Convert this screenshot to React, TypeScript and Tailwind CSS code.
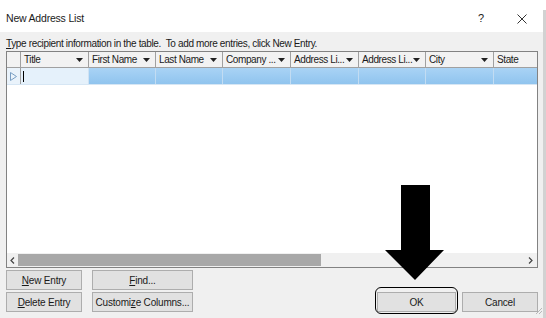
import React from 'react'

const font = { fontFamily: '"Segoe UI", "Liberation Sans", Arial, sans-serif' }

const columns: { label: string; w: string }[] = [
  { label: 'Title', w: 'w-[68px]' },
  { label: 'First Name', w: 'w-[67px]' },
  { label: 'Last Name', w: 'w-[67px]' },
  { label: 'Company ...', w: 'w-[68px]' },
  { label: 'Address Li...', w: 'w-[68px]' },
  { label: 'Address Li...', w: 'w-[67px]' },
  { label: 'City', w: 'w-[68px]' },
]

const DropArrow = () => (
  <svg width="7" height="4" viewBox="0 0 7 4" className="shrink-0">
    <path d="M0 0 L7 0 L3.5 4 Z" fill="#202020" />
  </svg>
)

const HeaderCell: React.FC<{ label: string; w: string }> = ({ label, w }) => (
  <div className={`${w} shrink-0 h-full flex items-center justify-between pl-[3px] pr-[5px] border-r border-[#a0a0a0] bg-[#f2f2f2]`}>
    <span className="text-[10px] tracking-[-0.4px] text-[#1a1a1a] whitespace-nowrap">{label}</span>
    <DropArrow />
  </div>
)

const Btn: React.FC<{ className?: string; children: React.ReactNode }> = ({ className = '', children }) => (
  <button className={`h-[20px] bg-[#e1e1e1] border border-[#adadad] text-[10px] tracking-[-0.2px] text-[#1a1a1a] flex items-center justify-center ${className}`}>
    {children}
  </button>
)

export default function App() {
  return (
    <div className="relative w-[546px] h-[318px] overflow-hidden bg-white flex" style={font}>
      <div className="w-[543px] h-full flex flex-col">
        {/* title bar */}
        <div className="h-[32px] bg-white flex items-center pl-[6px] pr-[16px] pt-[5px]">
          <span className="text-[10.5px] tracking-[-0.2px] text-[#1a1a1a] flex-1">New Address List</span>
          <span className="text-[11px] text-[#1a1a1a] mr-[33px]">?</span>
          <svg width="10" height="10" viewBox="0 0 10 10">
            <path d="M0.5 0.5 L9.5 9.5 M9.5 0.5 L0.5 9.5" stroke="#333" strokeWidth="1" />
          </svg>
        </div>

        {/* body */}
        <div className="flex-1 bg-[#f0f0f0] pl-[6px] pr-[5px] flex flex-col">
          <div className="pt-[5px] h-[19px] text-[10px] leading-[14px] tracking-[-0.35px] text-[#1a1a1a] whitespace-nowrap">
            <span className="underline">T</span>ype recipient information in the table.&nbsp; To add more entries, click New Entry.
          </div>

          {/* table */}
          <div className="h-[217px] border border-[#828282] bg-white flex flex-col">
            <div className="h-[16px] flex border-b border-[#a0a0a0] bg-[#f2f2f2]">
              <div className="w-[14px] shrink-0 h-full border-r border-[#a0a0a0]" />
              {columns.map((c, i) => (
                <HeaderCell key={i} label={c.label} w={c.w} />
              ))}
              <div className="flex-1 h-full flex items-center pl-[3px]">
                <span className="text-[10px] tracking-[-0.4px] text-[#1a1a1a]">State</span>
              </div>
            </div>
            <div className="h-[17px] flex border-b border-[#d6e6f4]">
              <div className="w-[14px] shrink-0 h-full border-r border-[#a0a0a0] bg-[#eaf3fb] flex items-center justify-center">
                <svg width="7" height="9" viewBox="0 0 7 9">
                  <path d="M0.5 0.5 L6.5 4.5 L0.5 8.5 Z" fill="none" stroke="#7a9fc4" strokeWidth="1" />
                </svg>
              </div>
              <div className="w-[68px] shrink-0 h-full bg-[#e5f1fb] border-r border-[#cfe2f3] flex items-center pl-[2px]">
                <div className="w-px h-[11px] bg-black" />
              </div>
              {columns.slice(1).map((c, i) => (
                <div key={i} className={`${c.w} shrink-0 h-full border-r border-[#c2dcf2] bg-gradient-to-b from-[#a9d3f5] to-[#90c4ee]`} />
              ))}
              <div className="flex-1 h-full bg-gradient-to-b from-[#a9d3f5] to-[#90c4ee]" />
            </div>
            <div className="flex-1" />
            {/* horizontal scrollbar */}
            <div className="h-[14px] flex items-stretch bg-[#f0f0f0]">
              <div className="w-[11px] flex items-center justify-center">
                <svg width="5" height="7" viewBox="0 0 5 7">
                  <path d="M4 0.5 L1 3.5 L4 6.5" fill="none" stroke="#444" strokeWidth="1.2" />
                </svg>
              </div>
              <div className="w-[303px] my-[1px] bg-[#a8a8a8]" />
              <div className="flex-1" />
              <div className="w-[14px] flex items-center justify-center">
                <svg width="5" height="7" viewBox="0 0 5 7">
                  <path d="M1 0.5 L4 3.5 L1 6.5" fill="none" stroke="#444" strokeWidth="1.2" />
                </svg>
              </div>
            </div>
          </div>

          {/* buttons */}
          <div className="mt-[2px] flex justify-between">
            <div className="grid grid-cols-[76px_101px] gap-x-[10px] gap-y-[2px]">
              <Btn><span className="underline">N</span>ew Entry</Btn>
              <Btn><span className="underline">F</span>ind...</Btn>
              <Btn><span className="underline">D</span>elete Entry</Btn>
              <Btn>Customi<span className="underline">z</span>e Columns...</Btn>
            </div>
            <div className="flex items-end gap-[6px]">
              <div className="relative">
                <Btn className="w-[79px]">OK</Btn>
                <div className="absolute -left-[2px] -right-[2px] -top-[5px] -bottom-[2px] border border-black rounded-[6px]" />
              </div>
              <Btn className="w-[76px]">Cancel</Btn>
            </div>
          </div>
        </div>
      </div>

      {/* right window edge */}
      <div className="flex-1 flex flex-col">
        <div className="h-[10px] bg-white" />
        <div className="flex-1 bg-[#d2d2d2]" />
      </div>

      {/* resize grip */}
      <svg className="absolute left-[534px] top-[306px]" width="9" height="9" viewBox="0 0 9 9">
        <path d="M8 2 L2 8 M8 5 L5 8" stroke="#b8b8b8" strokeWidth="1" />
      </svg>

      {/* annotation arrow */}
      <svg className="absolute left-[385px] top-[185px]" width="60" height="96" viewBox="0 0 60 96">
        <path d="M16 0 L45 0 L45 65 L59 65 L30 95 L0 65 L16 65 Z" fill="#000" />
      </svg>
    </div>
  )
}
